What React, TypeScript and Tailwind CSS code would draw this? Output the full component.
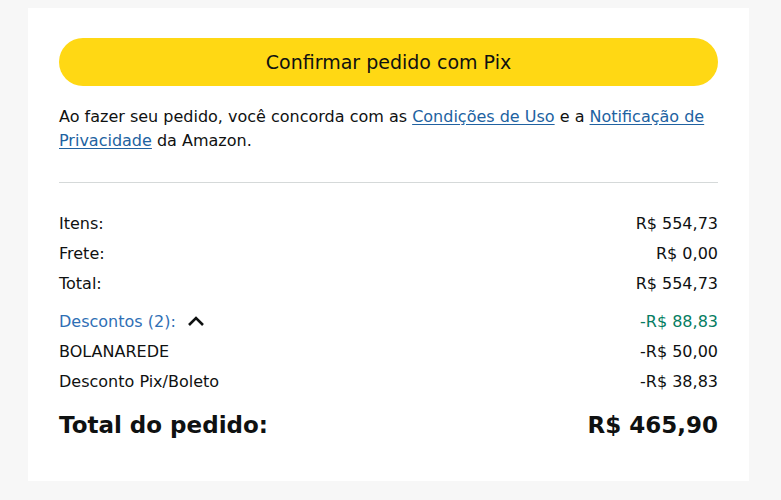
import React from 'react';

interface LineProps {
  label: React.ReactNode;
  value: string;
  valueClass?: string;
}

function Line({ label, value, valueClass = 'text-[#0f1111]' }: LineProps) {
  return (
    <div className="flex h-[30px] items-center justify-between">
      <div className="text-[#0f1111]">{label}</div>
      <div className={valueClass}>{value}</div>
    </div>
  );
}

export default function App() {
  return (
    <div
      className="min-h-[500px] bg-[#f7f7f7] pl-[28px] pr-[32px] pt-[8px] pb-[20px] text-[16px] text-[#0f1111]"
      style={{ fontFamily: '"DejaVu Sans", Verdana, sans-serif' }}
    >
      <div className="bg-white px-[31px] pt-[30px] pb-[40px]">
        <button className="flex h-[48px] w-full items-center justify-center rounded-full bg-[#ffd814] text-[19px] text-[#0f1111]">
          Confirmar pedido com Pix
        </button>

        <p className="mt-[19px] leading-[24px]">
          Ao fazer seu pedido, você concorda com as{' '}
          <a className="text-[#2162a1] underline underline-offset-2">Condições de Uso</a> e a{' '}
          <a className="text-[#2162a1] underline underline-offset-2">Notificação de Privacidade</a> da Amazon.
        </p>

        <hr className="mt-[29px] border-t border-[#d5d9d9]" />

        <div className="mt-[26px]">
          <Line label="Itens:" value="R$ 554,73" />
          <Line label="Frete:" value="R$ 0,00" />
          <Line label="Total:" value="R$ 554,73" />
        </div>

        <div className="mt-[8px]">
          <div className="flex h-[30px] items-center justify-between">
            <div className="flex items-center gap-[11px] text-[#2f6fb5]">
              Descontos (2):
              <svg width="18" height="12" viewBox="0 0 18 12" fill="none" className="-mt-[3px]">
                <path d="M2 10 L9 3 L16 10" stroke="#0f1111" strokeWidth="2.6" />
              </svg>
            </div>
            <div className="text-[#067d62]">-R$ 88,83</div>
          </div>
          <Line label="BOLANAREDE" value="-R$ 50,00" />
          <Line label="Desconto Pix/Boleto" value="-R$ 38,83" />
        </div>

        <div className="mt-[12px] flex h-[32px] items-center justify-between text-[23px] font-bold">
          <div>Total do pedido:</div>
          <div>R$ 465,90</div>
        </div>
      </div>
    </div>
  );
}
